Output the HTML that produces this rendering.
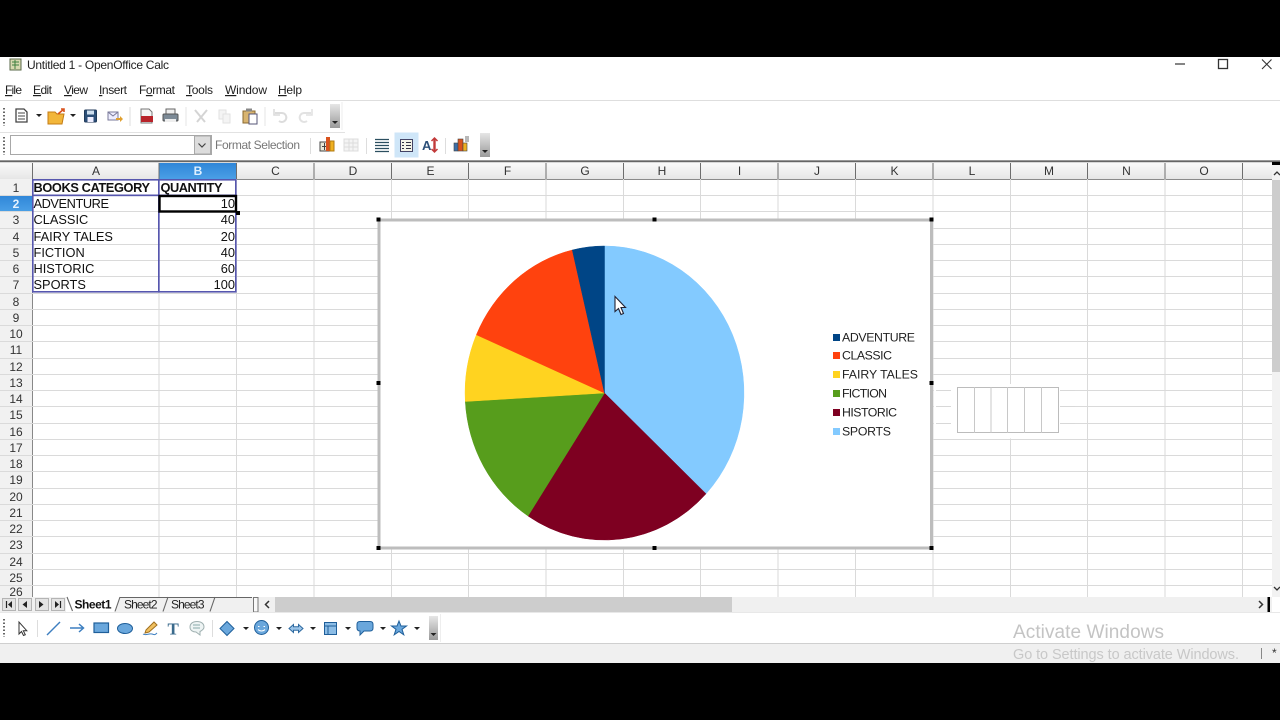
<!DOCTYPE html>
<html><head><meta charset="utf-8"><title>Untitled 1 - OpenOffice Calc</title>
<style>
html,body{margin:0;padding:0;background:#000;width:1280px;height:720px;overflow:hidden}
svg{display:block}
text{font-family:"Liberation Sans",sans-serif;fill:#222}
.m{font-size:12px;fill:#1e1e1e}
.h{font-size:12px;fill:#333;text-anchor:middle}
.c{font-size:12.8px;fill:#111}
.r{font-size:12.8px;fill:#111;text-anchor:end}
.l{font-size:12.3px;fill:#222}
.g{stroke:#dadada;stroke-width:1;fill:none}
.hd{stroke:#6e6e6e;stroke-width:1}
.b{stroke:#5656ae;stroke-width:1.6;fill:none}
</style></head><body>
<svg width="1280" height="720" viewBox="0 0 1280 720" xmlns="http://www.w3.org/2000/svg">
<defs>
<linearGradient id="hg" x1="0" y1="0" x2="0" y2="1"><stop offset="0" stop-color="#fafafa"/><stop offset="1" stop-color="#e6e6e6"/></linearGradient>
<linearGradient id="bg" x1="0" y1="0" x2="0" y2="1"><stop offset="0" stop-color="#2f86d8"/><stop offset="1" stop-color="#4a9fe6"/></linearGradient>
<linearGradient id="og" x1="0" y1="0" x2="0" y2="1"><stop offset="0" stop-color="#e6e6e6"/><stop offset="1" stop-color="#9a9a9a"/></linearGradient>
</defs>
<rect width="1280" height="720" fill="#000"/>
<rect y="57" width="1280" height="606" fill="#fff"/>

<!-- title bar -->
<rect x="10" y="59" width="11" height="11" fill="#d8d8b0" stroke="#5a6a4a"/>
<path d="M12 62h7M12 65h7M15 60v9" stroke="#3f7f3f" fill="none"/>
<text x="27" y="69" style="font-size:12px" textLength="142">Untitled 1 - OpenOffice Calc</text>
<path d="M1175 64h10" stroke="#333" stroke-width="1.2"/>
<rect x="1218.5" y="59.5" width="9" height="9" fill="none" stroke="#333" stroke-width="1.3"/>
<path d="M1262 59.5l9.5 9.5M1271.5 59.5l-9.5 9.5" stroke="#333" stroke-width="1.1"/>

<!-- menu -->
<text class="m" x="5" y="94" textLength="17"><tspan text-decoration="underline">F</tspan>ile</text>
<text class="m" x="33" y="94" textLength="19"><tspan text-decoration="underline">E</tspan>dit</text>
<text class="m" x="64" y="94" textLength="24"><tspan text-decoration="underline">V</tspan>iew</text>
<text class="m" x="99" y="94" textLength="28"><tspan text-decoration="underline">I</tspan>nsert</text>
<text class="m" x="139" y="94" textLength="36">F<tspan text-decoration="underline">o</tspan>rmat</text>
<text class="m" x="186" y="94" textLength="27"><tspan text-decoration="underline">T</tspan>ools</text>
<text class="m" x="225" y="94" textLength="42"><tspan text-decoration="underline">W</tspan>indow</text>
<text class="m" x="278" y="94" textLength="24"><tspan text-decoration="underline">H</tspan>elp</text>
<path d="M0 100.5h1280" stroke="#dedede"/>

<!-- toolbar 1 -->
<path d="M4 108v18" stroke="#666" stroke-width="2" stroke-dasharray="1.5 2"/>
<g>
<path d="M16 109h8l3 3v10H16z" fill="#fff" stroke="#444" stroke-width="1.3"/><path d="M18 113h7M18 116h7M18 119h7" stroke="#444"/>
<path d="M36 114h6l-3 3z" fill="#222"/>
<path d="M48 112h7l2 2h7l-2 10H48z" fill="#f2b63a" stroke="#c47c14"/><path d="M58 114l6-5m-3 0h3v3" stroke="#d9531e" stroke-width="1.6" fill="none"/>
<path d="M70 114h6l-3 3z" fill="#222"/>
<rect x="84.5" y="110" width="12" height="12" rx="1" fill="#2c4f78" stroke="#203a5a"/><rect x="87" y="110.5" width="7" height="4" fill="#cfe0f0"/><rect x="87.500" y="117" width="6" height="5" fill="#eef"/>
<rect x="108" y="112" width="10" height="8" fill="#eef" stroke="#7a7a9a"/><path d="M108 112l5 4 5-4" stroke="#7a7a9a" fill="none"/><path d="M116 118h4v-2l3 3-3 3v-2h-4z" fill="#e0a030"/>
<path d="M130 107v19" stroke="#ddd"/>
<path d="M141 109h8l3 3v11H141z" fill="#f4f4f4" stroke="#777"/><rect x="141" y="116" width="12" height="6" fill="#b8232a"/>
<rect x="166" y="109" width="9" height="5" fill="#eee" stroke="#666"/><rect x="163" y="114" width="15" height="7" rx="1" fill="#7c8a96" stroke="#555"/><rect x="165" y="119" width="11" height="3" fill="#eee"/>
<path d="M186 107v19" stroke="#e4e4e4"/>
<path d="M195 110l10 12M207 110l-10 12" stroke="#d4d4d4" stroke-width="2"/>
<rect x="219" y="110" width="7" height="9" fill="#f4f4f4" stroke="#e2e2e2"/><rect x="223" y="114" width="7" height="9" fill="#f4f4f4" stroke="#e2e2e2"/>
<rect x="243" y="111" width="12" height="12" fill="#d8b470" stroke="#8a6a30"/><rect x="246" y="108.500" width="6" height="3" fill="#888"/><rect x="249" y="114" width="8" height="10" fill="#fff" stroke="#557"/>
<path d="M265 107v19" stroke="#e4e4e4"/>
<path d="M275 113h7a4.500 4.500 0 1 1-3 8" stroke="#dcdcdc" stroke-width="2" fill="none"/><path d="M274 109v6h6" stroke="#dcdcdc" stroke-width="1.6" fill="none"/>
<path d="M311 113h-7a4.500 4.500 0 1 0 3 8" stroke="#e2e2e2" stroke-width="2" fill="none"/><path d="M312 109v6h-6" stroke="#e2e2e2" stroke-width="1.6" fill="none"/>
<rect x="330" y="104" width="10" height="24" fill="url(#og)"/><path d="M332 121h6l-3 3z" fill="#222"/>
<path d="M342 102v28" stroke="#eee"/>
</g>
<path d="M0 132.500h345" stroke="#e2e2e2"/>

<!-- toolbar 2 -->
<path d="M4 137v18" stroke="#666" stroke-width="2" stroke-dasharray="1.5 2"/>
<rect x="10.500" y="135.500" width="201" height="19" fill="#fff" stroke="#a8a8a8"/>
<rect x="194.500" y="136" width="16" height="18" fill="#dcdcdc" stroke="#a8a8a8"/>
<path d="M198.500 143.500l3.500 3.500 3.500-3.500" stroke="#444" stroke-width="1.2" fill="none"/>
<text x="215" y="149" style="font-size:12px;fill:#777" textLength="85">Format Selection</text>
<path d="M310.500 138v16" stroke="#ddd"/>
<rect x="320" y="142" width="9" height="9" fill="#e8e8d8" stroke="#444"/><path d="M324.500 143v7M322 146.500h5" stroke="#444"/><rect x="326" y="137" width="4" height="14" fill="#d9531e"/><rect x="330" y="141" width="4" height="10" fill="#efb020" stroke="#b07a10"/>
<g stroke="#dcdcdc" fill="#f4f4f4"><rect x="344" y="139" width="14" height="12"/><path d="M344 143h14M344 147h14M349 139v12M353 139v12" fill="none"/></g>
<path d="M366.500 138v16" stroke="#ddd"/>
<path d="M375 139.500h14M375 142.500h14M375 145.500h14M375 148.500h14M375 151.500h14" stroke="#2c4f60" stroke-width="1.2"/>
<rect x="394.500" y="132.500" width="24" height="25" fill="#cfe6f8"/>
<rect x="400.500" y="139.500" width="12" height="12" fill="#f4f4e8" stroke="#446"/><path d="M402 142.500h2M406 142.500h5M402 145.500h2M406 145.500h5M402 148.500h2M406 148.500h5" stroke="#334"/>
<text x="422" y="150" style="font-size:13px;font-weight:bold;fill:#2c4f78">A</text><path d="M434.500 139v12" stroke="#c23a3a" stroke-width="2.4"/><path d="M431.500 141l3-3 3 3M431.500 149l3 3 3-3" fill="none" stroke="#c23a3a" stroke-width="1.5"/>
<path d="M445.500 138v16" stroke="#ddd"/>
<rect x="454" y="143" width="4" height="8" fill="#3d6fa8" stroke="#444" stroke-width=".6"/><rect x="458" y="139" width="5" height="12" fill="#d9531e" stroke="#444" stroke-width=".6"/><rect x="463" y="143" width="4" height="8" fill="#efb020" stroke="#444" stroke-width=".6"/><path d="M465 137h4M465 139h4M465 141h4" stroke="#444" stroke-width=".8"/>
<rect x="480" y="133" width="10" height="24" fill="url(#og)"/><path d="M482 150h6l-3 3z" fill="#222"/>
<path d="M0 160.500h1280" stroke="#a9a9a9"/>
<path d="M0 161.500h1280" stroke="#666" stroke-width="1.5"/>

<!-- column headers -->
<rect x="0" y="163" width="1272" height="16" fill="url(#hg)"/>
<rect x="159" y="163" width="77.500" height="16" fill="url(#bg)"/>
<g class="hd">
<path d="M32.500 163v16M159 163v16M236.500 163v16M314 163v16M391.500 163v16M468.500 163v16M546 163v16M623.500 163v16M700.500 163v16M778 163v16M855.500 163v16M933 163v16M1010.500 163v16M1087.500 163v16M1165 163v16M1242.500 163v16"/>
</g>
<path d="M0 179.500h1272" stroke="#8a8a8a"/>
<g>
<text class="h" x="96" y="175">A</text><text class="h" x="198" y="175" style="fill:#dff0ff;font-weight:bold">B</text><text class="h" x="275.500" y="175">C</text><text class="h" x="353" y="175">D</text><text class="h" x="430.500" y="175">E</text><text class="h" x="507.500" y="175">F</text><text class="h" x="585" y="175">G</text><text class="h" x="662" y="175">H</text><text class="h" x="739.500" y="175">I</text><text class="h" x="817" y="175">J</text><text class="h" x="894.500" y="175">K</text><text class="h" x="972" y="175">L</text><text class="h" x="1049" y="175">M</text><text class="h" x="1126.500" y="175">N</text><text class="h" x="1204" y="175">O</text>
</g>

<!-- row header -->
<rect x="0" y="179" width="32" height="418" fill="#f1f1f1"/>
<rect x="0" y="195.500" width="32" height="16" fill="url(#bg)"/>
<path d="M32.500 179v418" stroke="#888"/>

<!-- grid -->
<g class="g">
<path d="M0 195.500H1272M0 211.500H1272M0 228.500H1272M0 244.500H1272M0 260.500H1272M0 276.500H1272M0 293.500H1272M0 309.500H1272M0 325.500H1272M0 341.500H1272M0 358.500H1272M0 374.500H1272M0 390.500H1272M0 406.500H1272M0 423.500H1272M0 439.500H1272M0 455.500H1272M0 471.500H1272M0 488.500H1272M0 504.500H1272M0 520.500H1272M0 536.500H1272M0 553.500H1272M0 569.500H1272M0 585.500H1272"/>
<path d="M159 179v418M236.500 179v418M314 179v418M391.500 179v418M468.500 179v418M546 179v418M623.500 179v418M700.500 179v418M778 179v418M855.500 179v418M933 179v418M1010.500 179v418M1087.500 179v418M1165 179v418M1242.500 179v418"/>
</g>

<!-- row numbers -->
<g>
<text class="h" x="16" y="192">1</text><text class="h" x="16" y="208" style="fill:#e6f3ff;font-weight:bold">2</text><text class="h" x="16" y="224">3</text><text class="h" x="16" y="241">4</text><text class="h" x="16" y="257">5</text><text class="h" x="16" y="273">6</text><text class="h" x="16" y="289">7</text><text class="h" x="16" y="306">8</text><text class="h" x="16" y="322">9</text><text class="h" x="16" y="338">10</text><text class="h" x="16" y="354">11</text><text class="h" x="16" y="371">12</text><text class="h" x="16" y="387">13</text><text class="h" x="16" y="403">14</text><text class="h" x="16" y="419">15</text><text class="h" x="16" y="436">16</text><text class="h" x="16" y="452">17</text><text class="h" x="16" y="468">18</text><text class="h" x="16" y="484">19</text><text class="h" x="16" y="501">20</text><text class="h" x="16" y="517">21</text><text class="h" x="16" y="533">22</text><text class="h" x="16" y="549">23</text><text class="h" x="16" y="566">24</text><text class="h" x="16" y="582">25</text><text class="h" x="16" y="596">26</text>
</g>

<!-- cells -->
<text class="c" x="33.500" y="192" style="font-weight:bold" textLength="116.500">BOOKS CATEGORY</text>
<text class="c" x="160.500" y="192" style="font-weight:bold" textLength="62">QUANTITY</text>
<text class="c" x="33.500" y="208" textLength="75.500">ADVENTURE</text>
<text class="c" x="33.500" y="224">CLASSIC</text>
<text class="c" x="33.500" y="241">FAIRY TALES</text>
<text class="c" x="33.500" y="257">FICTION</text>
<text class="c" x="33.500" y="273">HISTORIC</text>
<text class="c" x="33.500" y="289">SPORTS</text>
<text class="r" x="235" y="208">10</text>
<text class="r" x="235" y="224">40</text>
<text class="r" x="235" y="241">20</text>
<text class="r" x="235" y="257">40</text>
<text class="r" x="235" y="273">60</text>
<text class="r" x="235" y="289">100</text>

<!-- selection ranges -->
<rect class="b" x="32.800" y="179.800" width="126" height="15.500"/>
<rect class="b" x="158.800" y="179.800" width="77" height="15.500"/>
<rect class="b" x="32.800" y="195.300" width="126" height="96.500"/>
<rect class="b" x="158.800" y="195.300" width="77" height="96.500"/>
<rect x="159.500" y="196" width="76.500" height="15.500" fill="none" stroke="#000" stroke-width="2.400"/>
<rect x="236" y="211" width="4" height="4" fill="#000"/>

<!-- ghost object -->
<rect x="934" y="384" width="130" height="54.500" fill="#fff"/>
<g stroke="#d8d8d8" fill="none">
<path d="M936 390.500h15M936 406.500h15M936 423.500h15M1060 390.500h15M1060 406.500h15M1060 423.500h15"/>
<path d="M957.500 387.500h101v45h-101z" stroke="#bcbcbc"/>
<path d="M974.500 387v46M991 387v46M1007.500 387v46M1024.500 387v46M1041.500 387v46" stroke="#c8c8c8"/>
</g>

<!-- chart -->
<rect x="379" y="220" width="552.500" height="328" fill="#fff" stroke="#bdbdbd" stroke-width="3"/>
<g stroke-width=".5">
<path d="M604.500 393V246A139.500 147 0 0 1 706 493.800Z" fill="#83caff" stroke="#83caff"/>
<path d="M604.500 393L706 493.800A139.500 147 0 0 1 528 516Z" fill="#7e0021" stroke="#7e0021"/>
<path d="M604.500 393L528 516A139.500 147 0 0 1 465.300 401.500Z" fill="#579d1c" stroke="#579d1c"/>
<path d="M604.500 393L465.300 401.500A139.500 147 0 0 1 476.400 334.800Z" fill="#ffd320" stroke="#ffd320"/>
<path d="M604.500 393L476.400 334.800A139.500 147 0 0 1 572.300 250Z" fill="#ff420e" stroke="#ff420e"/>
<path d="M604.500 393L572.300 250A139.500 147 0 0 1 604.500 246Z" fill="#004586" stroke="#004586"/>
</g>
<rect x="833" y="334" width="7" height="7" fill="#004586"/><text class="l" x="842" y="341.500" textLength="73">ADVENTURE</text>
<rect x="833" y="352" width="7" height="7" fill="#ff420e"/><text class="l" x="842" y="359.500" textLength="50">CLASSIC</text>
<rect x="833" y="371" width="7" height="7" fill="#ffd320"/><text class="l" x="842" y="378.500" textLength="76">FAIRY TALES</text>
<rect x="833" y="390" width="7" height="7" fill="#579d1c"/><text class="l" x="842" y="397.500" textLength="45">FICTION</text>
<rect x="833" y="409" width="7" height="7" fill="#7e0021"/><text class="l" x="842" y="416.500" textLength="55">HISTORIC</text>
<rect x="833" y="428" width="7" height="7" fill="#83caff"/><text class="l" x="842" y="435.500" textLength="49">SPORTS</text>
<g fill="#000">
<rect x="376.500" y="217.500" width="4" height="4"/><rect x="652.500" y="217.500" width="4" height="4"/><rect x="929.500" y="217.500" width="4" height="4"/>
<rect x="376.500" y="381" width="4" height="4"/><rect x="929.500" y="381" width="4" height="4"/>
<rect x="376.500" y="546" width="4" height="4"/><rect x="652.500" y="546" width="4" height="4"/><rect x="929.500" y="546" width="4" height="4"/>
</g>
<!-- cursor -->
<path d="M615 296.500v15l3.500-3 2.500 6 2.500-1-2.500-6h4.500z" fill="#fff" stroke="#223" stroke-width="1.100"/>

<!-- vertical scrollbar -->
<rect x="1272" y="163" width="8" height="434" fill="#f2f2f2"/>
<rect x="1272" y="162" width="8" height="3" fill="#000"/>
<path d="M1274 175l3-3 3 3" fill="none" stroke="#333" stroke-width="1.300"/>
<rect x="1272" y="180" width="8" height="192" fill="#cdcdcd"/>
<path d="M1274 587l3 3 3-3" fill="none" stroke="#333" stroke-width="1.300"/>

<!-- tab bar -->
<rect x="0" y="597" width="1272" height="15" fill="#f0f0f0"/>
<g fill="#e4e4e4" stroke="#b4b4b4"><rect x="2.500" y="598.500" width="13" height="12"/><rect x="18.500" y="598.500" width="13" height="12"/><rect x="35.500" y="598.500" width="13" height="12"/><rect x="51.500" y="598.500" width="13" height="12"/></g>
<path d="M6.500 601v7" stroke="#222" stroke-width="1.200"/><path d="M12 601v7l-4-3.500z" fill="#222"/>
<path d="M27 601v7l-4.500-3.500z" fill="#222"/>
<path d="M39 601v7l4.500-3.500z" fill="#222"/>
<path d="M55 601v7l4-3.500z" fill="#222"/><path d="M60.500 601v7" stroke="#222" stroke-width="1.200"/>
<rect x="66" y="597" width="50" height="15" fill="#fff"/>
<path d="M66 597h6l6 14h37l5-14z" fill="#fff"/>
<g fill="none" stroke="#666" stroke-width="1.100">
<path d="M67 597l5.500 14"/>
<path d="M115 611.500l5-14.500"/>
<path d="M163 611.500l5-14.500"/>
<path d="M210 611.500l5-14.500"/>
<path d="M120 597.500h132"/>
</g>
<text x="74.500" y="608.500" style="font-size:12px;font-weight:bold;fill:#111" textLength="37">Sheet1</text>
<text x="124" y="608.500" style="font-size:12px;fill:#222" textLength="33.500">Sheet2</text>
<text x="171" y="608.500" style="font-size:12px;fill:#222" textLength="33.500">Sheet3</text>
<rect x="253.500" y="597.500" width="4.500" height="14.500" fill="#f8f8f8" stroke="#777"/>
<path d="M269 601l-3.500 3.500 3.500 3.500" fill="none" stroke="#333" stroke-width="1.500"/>
<rect x="275" y="597" width="457" height="15" fill="#cdcdcd"/>
<path d="M1259 601l3.500 3.500-3.500 3.500" fill="none" stroke="#333" stroke-width="1.500"/>
<rect x="1267.500" y="597" width="2.500" height="15" fill="#000"/>
<path d="M0 612.500h1280" stroke="#e8e8e8"/>

<!-- drawing toolbar -->
<path d="M4 619v18" stroke="#666" stroke-width="2" stroke-dasharray="1.500 2"/>
<path d="M19 622v12l2.500-2.500 2 4 1.800-.8-2-4h3.500z" fill="#fff" stroke="#333"/>
<path d="M37.500 620v17" stroke="#ddd"/>
<path d="M47 635l13-13" stroke="#3d7fc0" stroke-width="1.400"/>
<path d="M70 628h13m-4-4l4.500 4-4.500 4" stroke="#3d7fc0" stroke-width="1.500" fill="none"/>
<rect x="94" y="623" width="14.500" height="9.500" fill="#6aa7dc" stroke="#1f5f9a" stroke-width="1.200"/>
<ellipse cx="125" cy="628.500" rx="7.500" ry="5" fill="#6aa7dc" stroke="#1f5f9a"/>
<path d="M143 634c3 2 6-1 9 0s3 1 5-1" stroke="#3d7fc0" fill="none"/><path d="M146 630l8-8 3 3-8 7-4 1z" fill="#f0c060" stroke="#a07020"/>
<text x="167.500" y="634.500" style="font-family:'Liberation Serif',serif;font-size:17px;font-weight:bold;fill:#3a6a8c">T</text>
<path d="M197 621.500c-4 0-7 2-7 5.500s3 5 6 5l4 3v-3.500c2-1 4-2.500 4-4.500 0-3.500-3-5.500-7-5.500z" fill="#eef4f4" stroke="#9fb0b0"/><path d="M193 625h7M193 628h7" stroke="#8aa"/>
<path d="M212.500 620v17" stroke="#ddd"/>
<path d="M227 621.500l7 7-7 7-7-7z" fill="#6aa7dc" stroke="#1f5f9a"/>
<path d="M243 627h6l-3 3z" fill="#222"/>
<circle cx="261.500" cy="627.500" r="7" fill="#6aa7dc" stroke="#1f5f9a"/><path d="M258 626.500h1.500M263.500 626.500h1.500M258 629.500c2 2 5 2 7 0" stroke="#fff" fill="none"/>
<path d="M276 627h6l-3 3z" fill="#222"/>
<path d="M289 628.500l4.500-4v2.200h5v-2.200l4.500 4-4.500 4v-2.200h-5v2.200z" fill="#9cc4e8" stroke="#2e6aa0"/>
<path d="M310 627h6l-3 3z" fill="#222"/>
<rect x="324.500" y="622.500" width="12" height="12" fill="#8cbde6" stroke="#1f5f9a"/><path d="M324.500 626h12M328 626v8" stroke="#1f5f9a"/>
<path d="M345 627h6l-3 3z" fill="#222"/>
<path d="M360 621.500h10c2 0 3 1 3 3v3.500c0 2-1 3-3 3h-6l-4 4v-4c-2 0-3-1-3-3v-3.500c0-2 1-3 3-3z" fill="#6aa7dc" stroke="#1f5f9a"/>
<path d="M380 627h6l-3 3z" fill="#222"/>
<path d="M399 621l2 5h5.500l-4.500 3.300 1.800 5.500-4.800-3.300-4.800 3.300 1.800-5.500-4.500-3.300h5.500z" fill="#6aa7dc" stroke="#1f5f9a"/>
<path d="M414 627h6l-3 3z" fill="#222"/>
<rect x="429" y="616" width="9" height="24" fill="url(#og)"/><path d="M430.500 633h6l-3 3z" fill="#222"/>
<path d="M440.500 614v28" stroke="#eee"/>

<!-- status bar -->
<rect x="0" y="643.500" width="1280" height="19.500" fill="#f0f0f0"/>
<path d="M0 643.500h1280" stroke="#cfcfcf"/>
<path d="M1261.500 648v11" stroke="#888"/>
<text x="1272" y="657" style="font-size:12px;fill:#333">*</text>

<!-- watermark -->
<text x="1013" y="638" style="font-size:19px;fill:#c4c4c4" textLength="151">Activate Windows</text>
<text x="1013" y="659" style="font-size:14.500px;fill:#c8c8c8" textLength="226">Go to Settings to activate Windows.</text>
</svg>
</body></html>
